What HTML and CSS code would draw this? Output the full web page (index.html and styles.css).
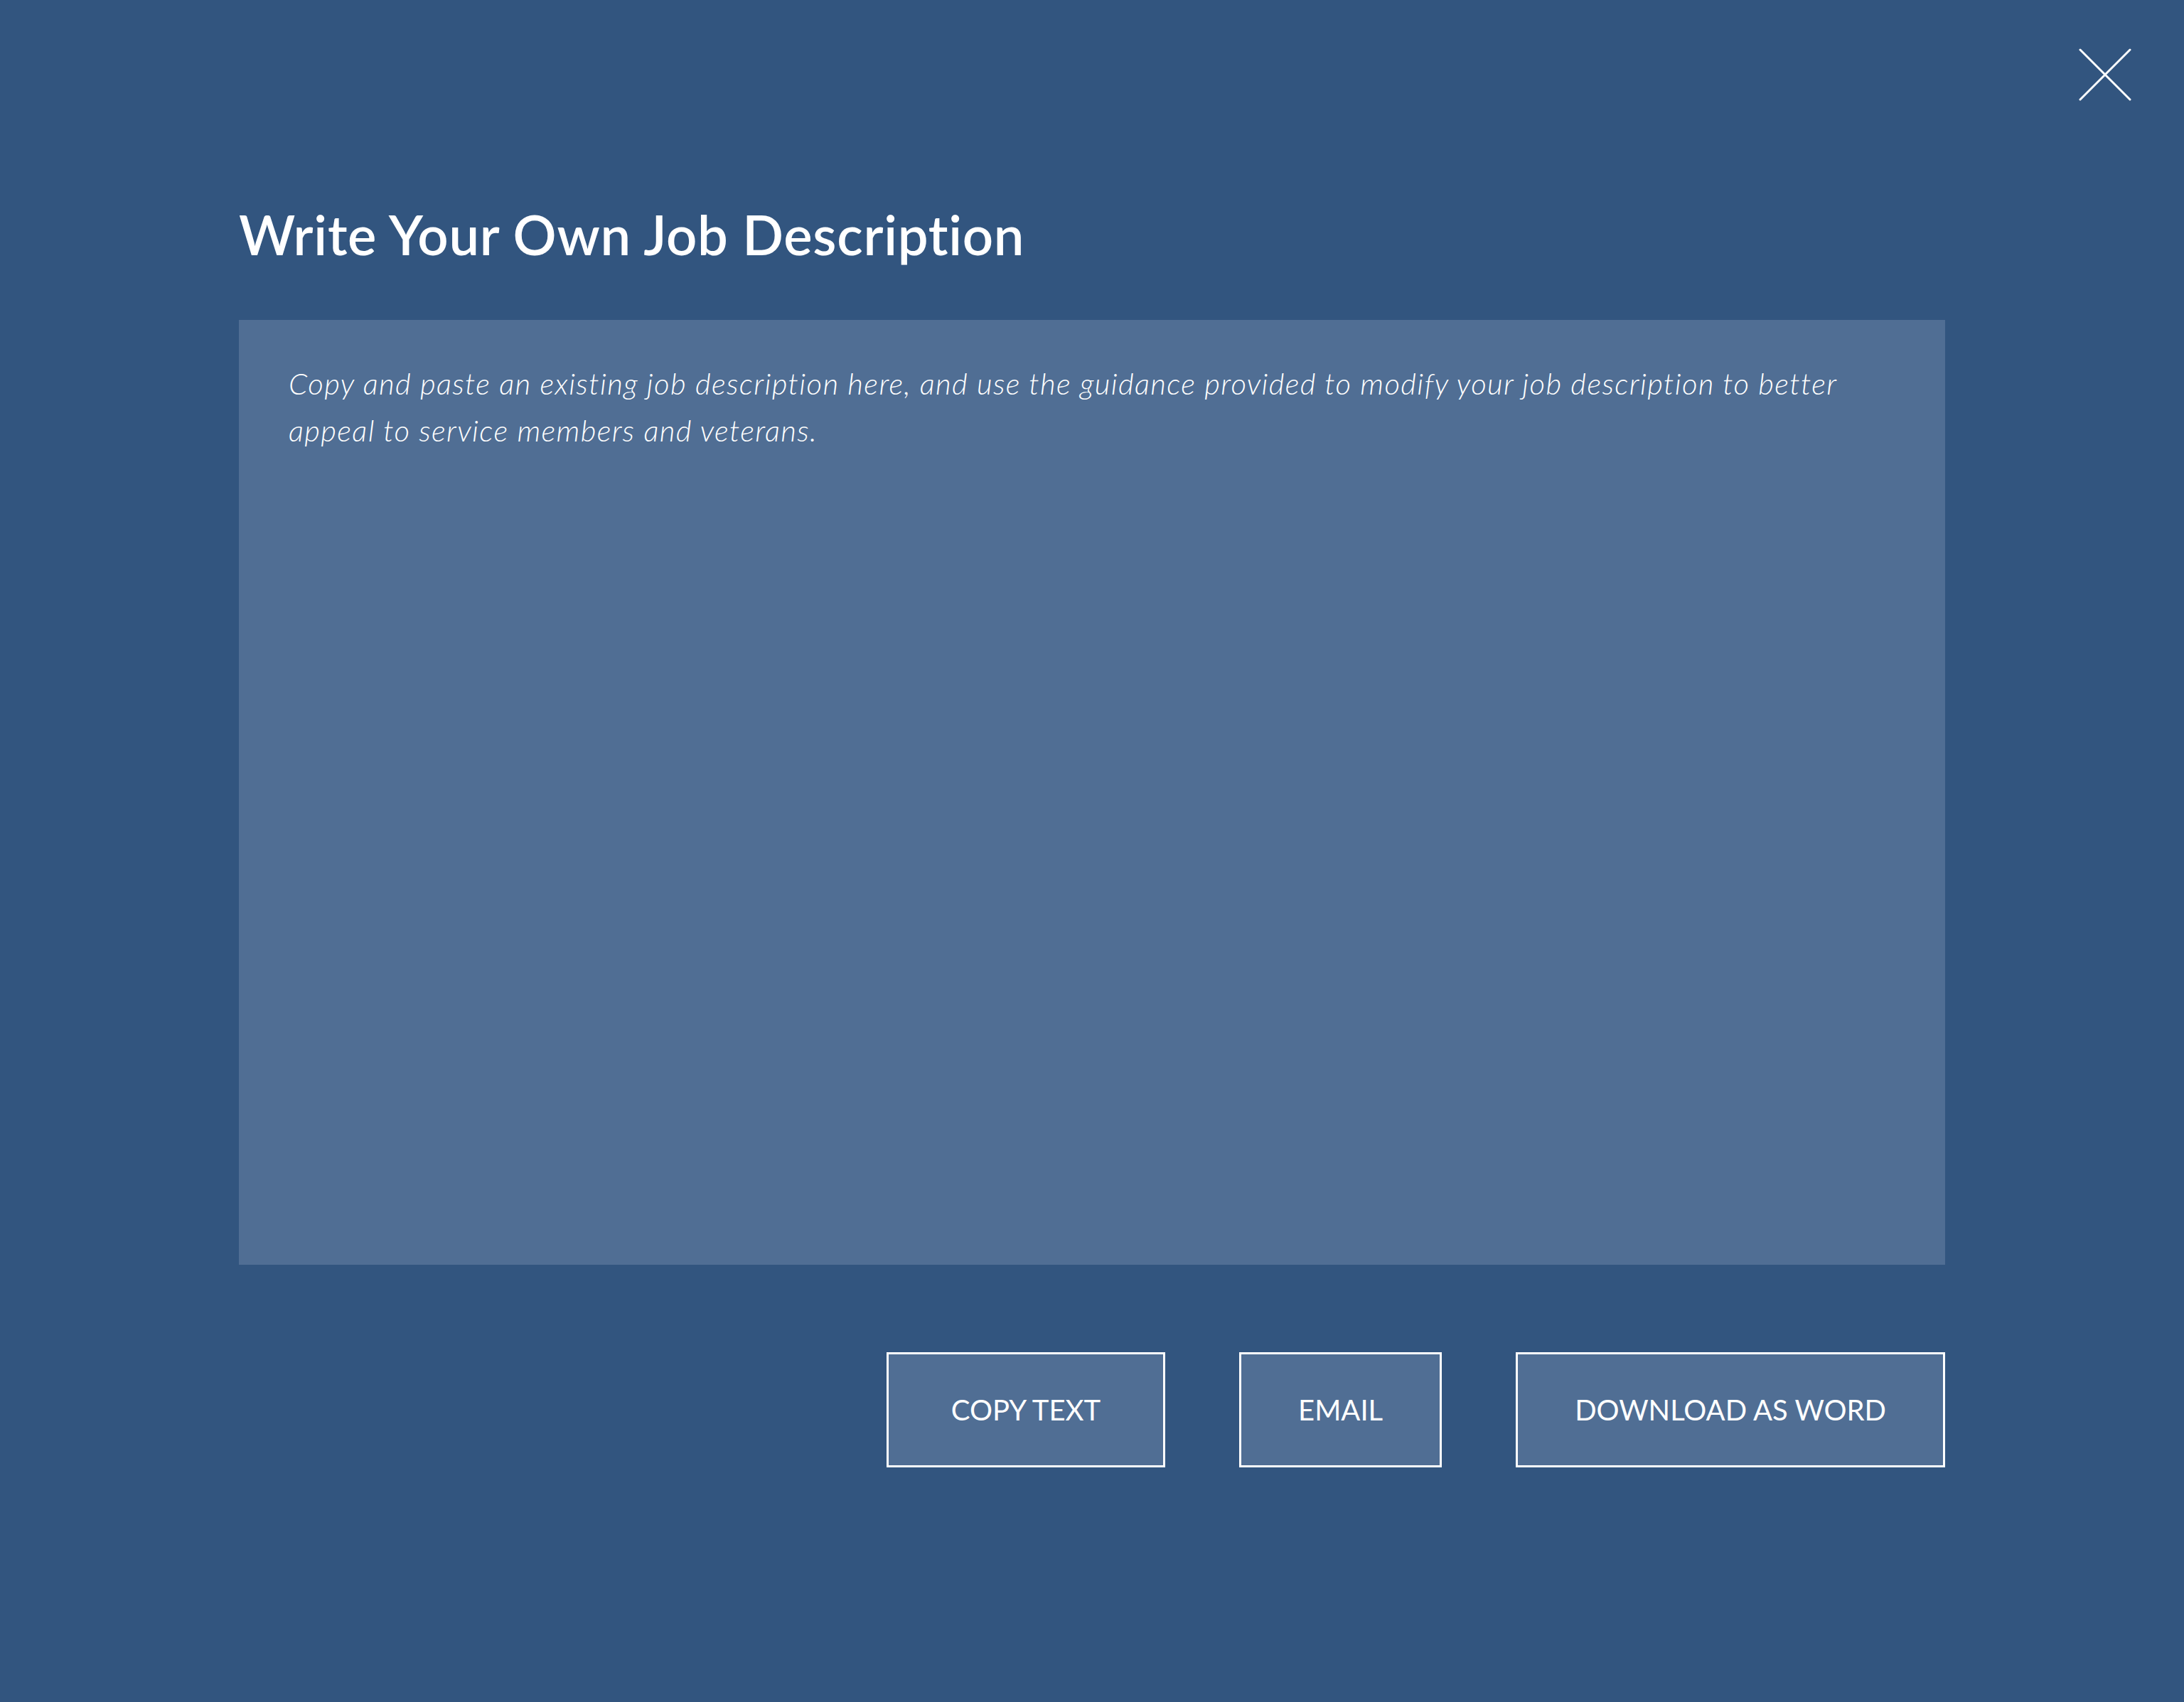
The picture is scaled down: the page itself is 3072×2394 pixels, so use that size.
FILE: index.html
```html
<!DOCTYPE html>
<html lang="en">
<head>
<meta charset="utf-8">
<title>Write Your Own Job Description</title>
<link rel="stylesheet" href="styles.css">
</head>
<body>
<div class="modal">
  <button class="close" aria-label="Close">
    <svg viewBox="0 0 74 74" width="74" height="74"><path d="M2 2 L72 72 M72 2 L2 72" stroke="#fff" stroke-width="3" stroke-linecap="round" fill="none"/></svg>
  </button>
  <div class="content">
    <h1 class="title">Write Your Own Job Description</h1>
    <textarea class="editor" placeholder="Copy and paste an existing job description here, and use the guidance provided to modify your job description to better appeal to service members and veterans."></textarea>
    <div class="actions">
      <button class="btn btn-copy">COPY TEXT</button>
      <button class="btn">EMAIL</button>
      <button class="btn">DOWNLOAD AS WORD</button>
    </div>
  </div>
</div>
</body>
</html>
```
FILE: styles.css
```css
html, body {
  margin: 0;
  padding: 0;
  background: #32557f;
}
.modal {
  position: relative;
  width: 3072px;
  height: 2394px;
  background: #32557f;
  font-family: "Lato", "Open Sans", sans-serif;
  color: #fff;
}
.close {
  position: absolute;
  top: 68px;
  left: 2924px;
  width: 74px;
  height: 74px;
  padding: 0;
  border: 0;
  background: transparent;
  cursor: pointer;
}
.close svg { display: block; }
.content {
  padding: 0 336px;
  padding-top: 280px;
  display: flex;
  flex-direction: column;
}
.title {
  margin: 0;
  font-size: 76px;
  font-weight: 600;
  line-height: 100px;
  letter-spacing: 0.7px;
}
.editor {
  margin-top: 70px;
  width: 2400px;
  height: 1329px;
  box-sizing: border-box;
  border: 0;
  background: #506e94;
  padding: 56px 70px;
  font-family: "Lato", sans-serif;
  font-style: italic;
  font-weight: 300;
  font-size: 42px;
  line-height: 66px;
  letter-spacing: 1.35px;
  color: #fff;
  resize: none;
  outline: none;
}
.editor::placeholder {
  color: #fff;
  opacity: 1;
}
.actions {
  margin-top: 123px;
  display: flex;
  justify-content: flex-end;
  gap: 104px;
}
.btn {
  height: 162px;
  padding: 0 80px;
  border: 3px solid #fff;
  background: #506e94;
  color: #fff;
  font-family: "Lato", sans-serif;
  font-size: 40px;
  font-weight: 400;
  letter-spacing: 0;
  cursor: pointer;
}
.btn-copy {
  padding: 0 88px;
}
```
